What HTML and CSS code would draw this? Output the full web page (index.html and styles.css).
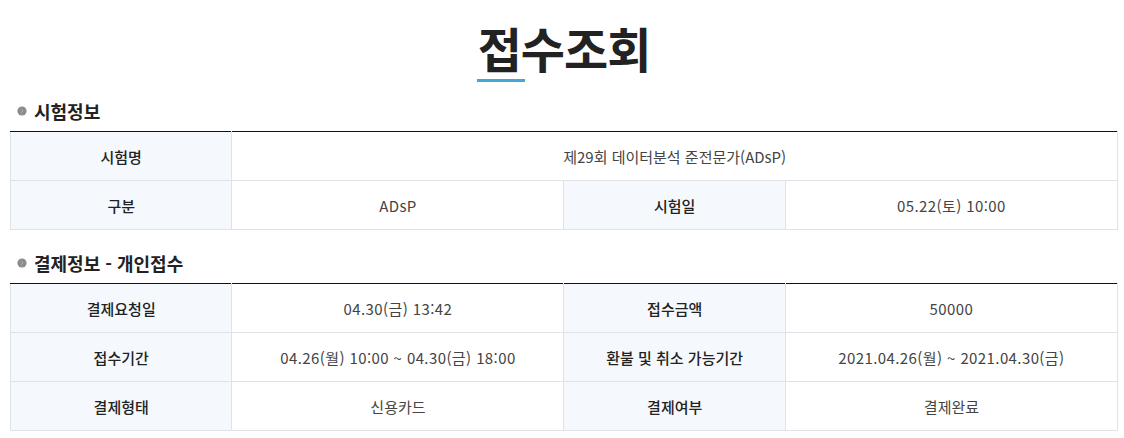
FILE: index.html
```html
<!DOCTYPE html>
<html lang="ko">
<head>
<meta charset="utf-8">
<title>접수조회</title>
<link rel="stylesheet" href="styles.css">
</head>
<body>
<div class="wrap">
  <h1 class="page-title"><span class="accent">접</span>수조회</h1>

  <h2 class="sec-title"><svg class="bullet" width="10" height="10" viewBox="0 0 10 10"><circle cx="5" cy="5" r="4.6" fill="#8c8c8c"/><path d="M4.2 3.3 L5.9 5 L4.2 6.7" fill="none" stroke="#b5b5b5" stroke-width="1"/></svg>시험정보</h2>
  <table class="info">
    <colgroup><col class="c-l"><col class="c-v"><col class="c-l"><col class="c-v"></colgroup>
    <tr><th>시험명</th><td colspan="3" class="kr">제29회 데이터분석 준전문가(ADsP)</td></tr>
    <tr><th>구분</th><td>ADsP</td><th>시험일</th><td>05.22(토) 10:00</td></tr>
  </table>

  <h2 class="sec-title"><svg class="bullet" width="10" height="10" viewBox="0 0 10 10"><circle cx="5" cy="5" r="4.6" fill="#8c8c8c"/><path d="M4.2 3.3 L5.9 5 L4.2 6.7" fill="none" stroke="#b5b5b5" stroke-width="1"/></svg>결제정보 - 개인접수</h2>
  <table class="info">
    <colgroup><col class="c-l"><col class="c-v"><col class="c-l"><col class="c-v"></colgroup>
    <tr><th>결제요청일</th><td>04.30(금) 13:42</td><th>접수금액</th><td>50000</td></tr>
    <tr><th>접수기간</th><td>04.26(월) 10:00 ~ 04.30(금) 18:00</td><th>환불 및 취소 가능기간</th><td>2021.04.26(월) ~ 2021.04.30(금)</td></tr>
    <tr><th>결제형태</th><td class="kr">신용카드</td><th>결제여부</th><td class="kr">결제완료</td></tr>
  </table>
</div>
</body>
</html>
```
FILE: styles.css
```css
html, body {
  margin: 0;
  padding: 0;
  background: #fff;
}
body {
  font-family: "Noto Sans CJK KR", "Noto Sans", sans-serif;
  color: #333;
}
.wrap {
  padding: 0 6px 0 10px;
}
.page-title {
  margin: 0;
  padding-top: 14px;
  height: 66px;
  line-height: 66px;
  text-align: center;
  font-size: 48px;
  font-weight: 700;
  color: #222;
  letter-spacing: -1px;
}
.accent {
  position: relative;
  display: inline-block;
}
.accent::after {
  content: "";
  position: absolute;
  left: -1px;
  right: -4px;
  bottom: -2px;
  height: 3px;
  background: #47a6d6;
}
.sec-title {
  display: flex;
  align-items: center;
  margin: 0 0 9px;
  padding-left: 7px;
  height: 22px;
  line-height: 22px;
  font-size: 18px;
  font-weight: 700;
  color: #222;
}
.info + .sec-title {
  margin-top: 22px;
}
.sec-title:first-of-type {
  margin-top: 20px;
}
.bullet {
  margin-right: 7px;
  flex: none;
}
.info {
  width: 100%;
  border-collapse: collapse;
  table-layout: fixed;
  border-top: 1px solid #111;
  font-size: 15px;
}
.c-l { width: 20%; }
.c-v { width: 30%; }
.info th,
.info td {
  height: 48px;
  padding: 0 8px;
  border: 1px solid #dfe3e8;
  text-align: center;
  vertical-align: middle;
}
.info tr:first-child th,
.info tr:first-child td {
  border-top-color: #111;
}
.info th {
  background: #f5f9fd;
  font-weight: 500;
  color: #222;
}
.info td {
  font-weight: 400;
  color: #444;
  letter-spacing: 0.4px;
}
.info td.kr {
  letter-spacing: 0;
}
```
